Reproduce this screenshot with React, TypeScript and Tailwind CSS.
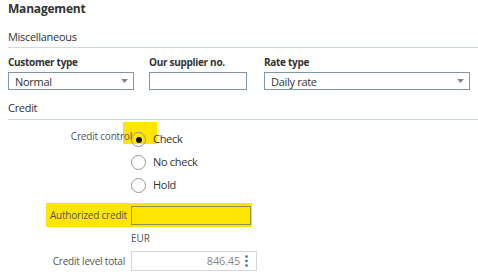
import React from 'react'

const font = { fontFamily: '"Open Sans", "Liberation Sans", sans-serif' }

function Radio({ checked, label }: { checked?: boolean; label: string }) {
  return (
    <div className="flex h-[23px] items-center gap-[7px]">
      <span className="flex h-[15px] w-[15px] items-center justify-center rounded-full border border-[#8f9aa3]">
        {checked && <span className="h-[6px] w-[6px] rounded-full bg-[#111]" />}
      </span>
      <span className="text-[11px] tracking-[-0.3px] text-[#333]">{label}</span>
    </div>
  )
}

function Select({ value, className }: { value: string; className: string }) {
  return (
    <div className={`flex h-[18px] items-center justify-between border border-[#7f97a6] bg-white pl-[6px] pr-[5px] ${className}`}>
      <span className="text-[11px] leading-none tracking-[-0.3px] text-[#333]">{value}</span>
      <svg width="7" height="4" viewBox="0 0 7 4">
        <path d="M0 0h7L3.5 4z" fill="#7d8c96" />
      </svg>
    </div>
  )
}

export default function App() {
  return (
    <div className="h-[277px] w-[478px] overflow-hidden bg-white pl-[8px]" style={font}>
      <div className="text-[12px] font-bold leading-[18px] tracking-[-0.2px] text-[#333]">Management</div>

      <div className="mt-[12px] border-b border-[#c6dcec] pb-[3px] text-[11px] leading-[14px] tracking-[-0.3px] text-[#333]">
        Miscellaneous
      </div>

      <div className="mt-[7px] flex">
        <div className="w-[126px]">
          <div className="mb-[3px] text-[10px] font-bold leading-[14px] tracking-[-0.3px] text-[#333]">Customer type</div>
          <Select value="Normal" className="w-[126px]" />
        </div>
        <div className="ml-[15px] w-[98px]">
          <div className="mb-[3px] text-[10px] font-bold leading-[14px] tracking-[-0.3px] text-[#333]">Our supplier no.</div>
          <div className="h-[18px] border border-[#7f97a6] bg-white" />
        </div>
        <div className="ml-[17px] w-[206px]">
          <div className="mb-[3px] text-[10px] font-bold leading-[14px] tracking-[-0.3px] text-[#333]">Rate type</div>
          <Select value="Daily rate" className="w-[206px]" />
        </div>
      </div>

      <div className="mt-[11px] border-b border-[#c6dcec] pb-[4px] text-[11px] leading-[14px] tracking-[-0.3px] text-[#333]">
        Credit
      </div>

      <div className="mt-[8px] flex">
        <div className="relative z-10 w-[125px] whitespace-nowrap pr-[1px] pt-[1px] text-right text-[10px] leading-[14px] tracking-[-0.2px] text-[#555]">
          Credit control
        </div>
        <div className="relative ml-[-2px] flex flex-col">
          <span className="absolute left-[-8px] top-[-6px] h-[22px] w-[34px] bg-[#ffe600]" />
          <div className="relative flex flex-col">
            <Radio checked label="Check" />
            <Radio label="No check" />
            <Radio label="Hold" />
          </div>
        </div>
      </div>

      <div className="relative mt-[6px] flex h-[24px] items-center">
        <span className="absolute left-[38px] top-0 h-[24px] w-[206px] bg-[#ffe600]" />
        <div className="relative w-[123px] pr-[4px] text-right text-[10px] leading-[14px] tracking-[-0.2px] text-[#555]">
          Authorized credit
        </div>
        <div className="relative h-[19px] w-[120px] border border-[#8a8f55]" />
      </div>

      <div className="mt-[5px] pl-[123px] text-[10px] leading-[12px] text-[#555]">EUR</div>

      <div className="mt-[7px] flex items-center">
        <div className="w-[123px] pr-[6px] text-right text-[10px] leading-[14px] tracking-[-0.2px] text-[#555]">
          Credit level total
        </div>
        <div className="flex h-[20px] w-[126px] items-center justify-end gap-[5px] border border-[#d3d8dc] pr-[8px]">
          <span className="text-[11px] tracking-[-0.2px] text-[#888]">846.45</span>
          <svg width="3" height="12" viewBox="0 0 3 12">
            <circle cx="1.5" cy="1.5" r="1.3" fill="#3a6f98" />
            <circle cx="1.5" cy="6" r="1.3" fill="#3a6f98" />
            <circle cx="1.5" cy="10.5" r="1.3" fill="#3a6f98" />
          </svg>
        </div>
      </div>
    </div>
  )
}
